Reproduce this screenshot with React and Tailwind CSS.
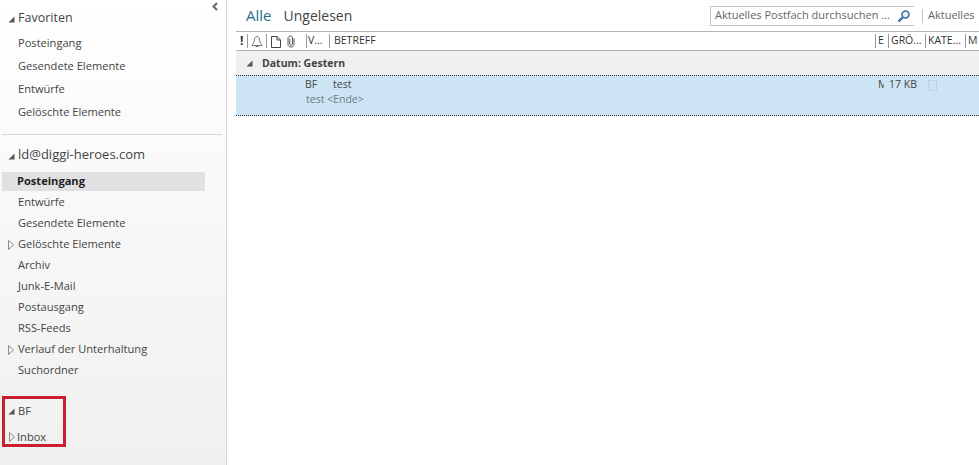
const favorites = ["Posteingang", "Gesendete Elemente", "Entwürfe", "Gelöschte Elemente"];

const folders = [
  { name: "Entwürfe" },
  { name: "Gesendete Elemente" },
  { name: "Gelöschte Elemente", closed: true },
  { name: "Archiv" },
  { name: "Junk-E-Mail" },
  { name: "Postausgang" },
  { name: "RSS-Feeds" },
  { name: "Verlauf der Unterhaltung", closed: true },
  { name: "Suchordner" },
];

// Filled corner triangle for an expanded tree node
function OpenArrow({ className = "" }) {
  return (
    <svg width="7" height="7" viewBox="0 0 7 7" className={className}>
      <path d="M6.5 0.5V6.5H0.5Z" fill="#555" />
    </svg>
  );
}

// Hollow triangle for a collapsed tree node
function ClosedArrow({ className = "" }) {
  return (
    <svg width="6" height="10" viewBox="0 0 6 10" className={className}>
      <path d="M0.5 0.5L5.5 5L0.5 9.5Z" fill="none" stroke="#8a8a8a" />
    </svg>
  );
}

function Sidebar() {
  return (
    <aside className="relative w-[227px] shrink-0 border-r border-[#d4d4d4] bg-gradient-to-b from-white to-[#f0f0f0] pt-[6px] text-[#444]">
      <button className="absolute right-[5px] top-0 flex h-3 w-3 items-center justify-center">
        <svg width="6" height="9" viewBox="0 0 6 9">
          <path d="M5 1L1.5 4.5L5 8" fill="none" stroke="#666" strokeWidth="2" />
        </svg>
      </button>

      <div className="flex h-[25px] items-center text-[12.5px]">
        <OpenArrow className="ml-[8px] mr-[3px] mt-[2px]" />
        Favoriten
      </div>
      <div className="mt-[1px]">
        {favorites.map((name) => (
          <div key={name} className="flex h-[23px] items-center pl-[18px] text-[11.1px]">
            {name}
          </div>
        ))}
      </div>

      <div className="ml-[2px] mr-[4px] mt-[10px] border-t border-[#d4d4d4]" />

      <div className="mt-[8px] flex h-[24px] items-center text-[13px]">
        <OpenArrow className="ml-[8px] mr-[3px] mt-[2px]" />
        ld@diggi-heroes.com
      </div>
      <div className="ml-[2px] mt-[5px] flex h-[19px] w-[203px] items-center bg-[#e1e1e1] pl-[15px] text-[11.1px] font-bold text-[#222]">
        Posteingang
      </div>
      <div className="mt-[1px]">
        {folders.map((f) => (
          <div key={f.name} className="flex h-[21px] items-center text-[11.1px]">
            <span className="flex w-[18px] justify-end pr-[4px]">
              {f.closed && <ClosedArrow />}
            </span>
            {f.name}
          </div>
        ))}
      </div>

      <div className="mt-[18px] flex h-[24px] items-center text-[11.1px]">
        <OpenArrow className="ml-[8px] mr-[3px]" />
        BF
      </div>
      <div className="mt-[2px] flex h-[24px] items-center text-[11.1px]">
        <ClosedArrow className="ml-[9px] mr-[2px]" />
        Inbox
      </div>

      {/* highlight drawn over the folder tree */}
      <div className="absolute left-[2px] top-[396px] h-[51px] w-[64px] border-[3px] border-[#c8202f]" />
    </aside>
  );
}

function HeaderCell({ w, children, pad = "pl-[2px]" }) {
  return (
    <div className={`flex h-[14px] shrink-0 items-center overflow-hidden whitespace-nowrap border-l border-[#9a9a9a] ${pad} ${w}`}>
      {children}
    </div>
  );
}

function MessageList() {
  return (
    <div className="text-[10.5px] text-[#444]">
      <div className="flex h-[20px] items-center border-y border-[#b4b4b4] bg-white pl-[4px] text-[#333]">
        <div className="w-[7px] shrink-0 text-[12px] font-bold leading-none">!</div>
        <HeaderCell w="w-[19px]" pad="pl-[3px]">
          <svg width="12" height="13" viewBox="0 0 12 13">
            <path d="M6 1.5C4.2 1.5 3.8 3 3.5 5C3.2 7.5 2 9 0.8 10.5H11.2C10 9 8.8 7.5 8.5 5C8.2 3 7.8 1.5 6 1.5Z" fill="none" stroke="#777" />
            <path d="M4.5 11.5H7.5" stroke="#777" />
          </svg>
        </HeaderCell>
        <HeaderCell w="w-[17px]" pad="pl-[4px]">
          <svg width="10" height="13" viewBox="0 0 10 13">
            <path d="M0.5 1.5H6L9.5 5V12.5H0.5ZM6 1.5V5H9.5" fill="none" stroke="#444" />
          </svg>
        </HeaderCell>
        <div className="flex w-[23px] shrink-0 pl-[4px]">
          <svg width="8" height="13" viewBox="0 0 8 13">
            <path d="M7 3.5V9.5C7 11.2 5.6 12 4 12C2.4 12 1 11.2 1 9.5V3.5C1 2 2.2 1 4 1C5.2 1 5.5 2 5.5 3V9C5.5 9.8 4.8 10.2 4 10.2C3.2 10.2 2.8 9.8 2.8 9V3.5" fill="none" stroke="#555" />
          </svg>
        </div>
        <HeaderCell w="w-[23px]" pad="pl-[1px]">V...</HeaderCell>
        <HeaderCell w="flex-1 min-w-0" pad="pl-[4px]">BETREFF</HeaderCell>
        <HeaderCell w="w-[13px]">E</HeaderCell>
        <HeaderCell w="w-[37px]">GRÖ...</HeaderCell>
        <HeaderCell w="w-[40px]">KATE...</HeaderCell>
        <HeaderCell w="w-[14px]">M</HeaderCell>
      </div>

      <div className="flex h-[24px] items-center bg-[#f0f0f0] pl-[10px] pt-[1px] text-[#444]">
        <OpenArrow className="mr-[9px]" />
        <span className="font-bold">Datum: Gestern</span>
      </div>

      <div className="h-[41px] border-y border-dotted border-[#333] bg-[#cde4f4]">
        <div className="relative flex h-[17px] items-center pl-[69px]">
          <span className="w-[28px]">BF</span>
          <span>test</span>
          <span className="ml-auto mr-[5px] w-[6px] overflow-hidden whitespace-nowrap">M</span>
          <span className="mr-[62px]">17 KB</span>
          <span className="absolute right-[42px] top-[4px] h-[11px] w-[9px] border border-[#bfd3e2]" />
        </div>
        <div className="pl-[70px] leading-[12px] text-[#6b7b86]">test &lt;Ende&gt;</div>
      </div>
    </div>
  );
}

export default function App() {
  return (
    <div className="flex h-[465px] w-[979px] overflow-hidden bg-white font-['Open_Sans','Noto_Sans',sans-serif]">
      <Sidebar />
      <main className="min-w-0 flex-1 pl-[9px]">
        <div className="flex h-[31px] items-center">
          <span className="ml-[10px] text-[15px] text-[#1f6f8b]">Alle</span>
          <span className="ml-[12px] text-[14px] text-[#444]">Ungelesen</span>
          <div className="ml-auto flex h-[20px] w-[204px] items-center justify-between border border-r-0 border-[#c4c4c4] pl-[4px] pr-[3px] text-[11px] text-[#666]">
            Aktuelles Postfach durchsuchen ...
            <svg width="14" height="14" viewBox="0 0 14 14">
              <circle cx="8.5" cy="5.5" r="3.5" fill="#e8f0f7" stroke="#3b6d9c" strokeWidth="1.6" />
              <path d="M5.5 8.5L1.5 12.5" stroke="#3b6d9c" strokeWidth="2.4" />
            </svg>
          </div>
          <div className="ml-[8px] flex h-[14px] w-[57px] items-center whitespace-nowrap border-l border-[#c4c4c4] pl-[5px] text-[11px] text-[#666]">
            Aktuelles
          </div>
        </div>
        <MessageList />
      </main>
    </div>
  );
}
